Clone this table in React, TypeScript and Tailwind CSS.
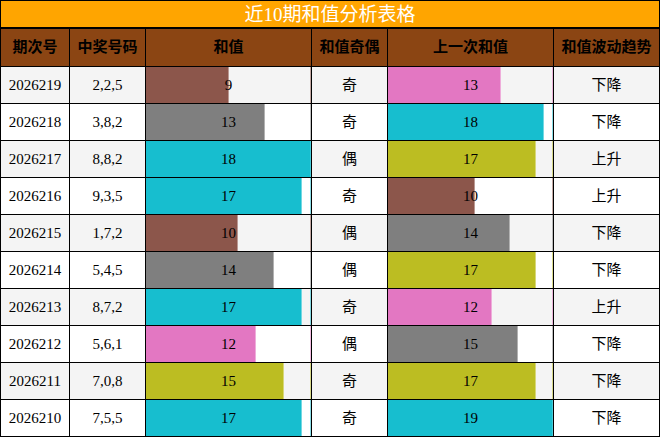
const rows = [
  { id: '2026219', nums: '2,2,5', sum: 9, sumColor: '#8c564b', parity: '奇', prev: 13, prevColor: '#e377c2', trend: '下降' },
  { id: '2026218', nums: '3,8,2', sum: 13, sumColor: '#7f7f7f', parity: '奇', prev: 18, prevColor: '#17becf', trend: '下降' },
  { id: '2026217', nums: '8,8,2', sum: 18, sumColor: '#17becf', parity: '偶', prev: 17, prevColor: '#bcbd22', trend: '上升' },
  { id: '2026216', nums: '9,3,5', sum: 17, sumColor: '#17becf', parity: '奇', prev: 10, prevColor: '#8c564b', trend: '上升' },
  { id: '2026215', nums: '1,7,2', sum: 10, sumColor: '#8c564b', parity: '偶', prev: 14, prevColor: '#7f7f7f', trend: '下降' },
  { id: '2026214', nums: '5,4,5', sum: 14, sumColor: '#7f7f7f', parity: '偶', prev: 17, prevColor: '#bcbd22', trend: '下降' },
  { id: '2026213', nums: '8,7,2', sum: 17, sumColor: '#17becf', parity: '奇', prev: 12, prevColor: '#e377c2', trend: '上升' },
  { id: '2026212', nums: '5,6,1', sum: 12, sumColor: '#e377c2', parity: '偶', prev: 15, prevColor: '#7f7f7f', trend: '下降' },
  { id: '2026211', nums: '7,0,8', sum: 15, sumColor: '#bcbd22', parity: '奇', prev: 17, prevColor: '#bcbd22', trend: '下降' },
  { id: '2026210', nums: '7,5,5', sum: 17, sumColor: '#17becf', parity: '奇', prev: 19, prevColor: '#17becf', trend: '下降' },
]

const headers = ['期次号', '中奖号码', '和值', '和值奇偶', '上一次和值', '和值波动趋势']

const maxSum = Math.max(...rows.map((r) => r.sum))
const maxPrev = Math.max(...rows.map((r) => r.prev))

// 条形图单元格：背景条 + 居中数字
function BarCell({ value, max, color, bg }: { value: number; max: number; color: string; bg: string }) {
  return (
    <div className={`relative flex items-center justify-center ${bg}`}>
      <div
        className="absolute left-0 top-0 bottom-0 border-r border-white/40"
        style={{ width: `${(value / max) * 100}%`, backgroundColor: color }}
      />
      <div className="absolute right-0 top-0 bottom-0 w-px opacity-50" style={{ backgroundColor: color }} />
      <span className="relative">{value}</span>
    </div>
  )
}

export default function App() {
  return (
    <div
      className="w-[660px] h-[437px] bg-black px-px pt-px pb-px flex flex-col text-black"
      style={{ fontFamily: '"Liberation Serif", "Noto Sans CJK SC", serif' }}
    >
      {/* 标题 */}
      <div className="h-[26px] bg-[#ffa500] flex items-center justify-center text-white text-[19px] leading-none">
        近10期和值分析表格
      </div>

      {/* 表格 */}
      <div className="mt-[2px] grid grid-cols-[68px_75px_165px_75px_165px_105px] grid-rows-[37px_repeat(10,36px)] gap-px text-[15px]">
        {headers.map((h) => (
          <div key={h} className="bg-[#8b4513] flex items-center justify-center font-bold">
            {h}
          </div>
        ))}
        {rows.map((r, i) => {
          const bg = i % 2 === 0 ? 'bg-[#f4f4f4]' : 'bg-white'
          return (
            <div key={r.id} className="contents">
              <div className={`${bg} flex items-center justify-center`}>{r.id}</div>
              <div className={`${bg} flex items-center justify-center`}>{r.nums}</div>
              <BarCell value={r.sum} max={maxSum} color={r.sumColor} bg={bg} />
              <div className={`${bg} flex items-center justify-center`}>{r.parity}</div>
              <BarCell value={r.prev} max={maxPrev} color={r.prevColor} bg={bg} />
              <div className={`${bg} flex items-center justify-center`}>{r.trend}</div>
            </div>
          )
        })}
      </div>
    </div>
  )
}
